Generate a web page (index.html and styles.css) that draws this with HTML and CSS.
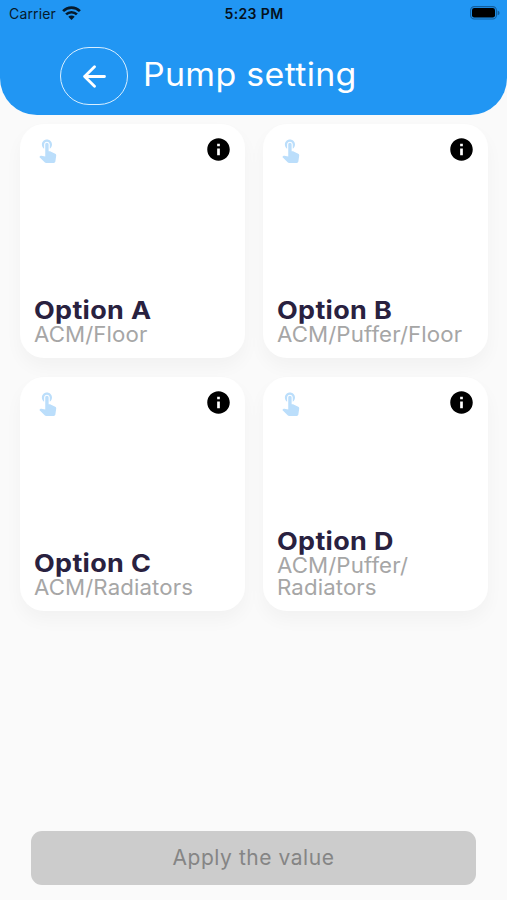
FILE: index.html
```
<!DOCTYPE html>
<html lang="en">
<head>
<meta charset="utf-8">
<title>Pump setting</title>
<link rel="stylesheet" href="styles.css">
</head>
<body>
<svg class="symbols" aria-hidden="true">
  <symbol id="touch" viewBox="0 0 24 24"><path d="M9 11.24V7.5C9 6.12 10.12 5 11.5 5S14 6.12 14 7.5v3.74c1.21-.81 2-2.18 2-3.74C16 5.01 13.99 3 11.5 3S7 5.01 7 7.5c0 1.56.79 2.93 2 3.74zm9.84 4.63l-4.54-2.26c-.17-.07-.35-.11-.54-.11H13v-6c0-.83-.67-1.5-1.5-1.5S10 6.67 10 7.5v10.74l-3.43-.72c-.08-.01-.15-.03-.24-.03-.31 0-.59.13-.79.33l-.79.8 4.94 4.94c.27.27.65.44 1.06.44h6.79c.75 0 1.33-.55 1.44-1.28l.75-5.27c.01-.07.02-.14.02-.2 0-.62-.38-1.16-.91-1.38z"/></symbol>
  <symbol id="info" viewBox="0 0 24 24"><path d="M12 2C6.48 2 2 6.48 2 12s4.48 10 10 10 10-4.48 10-10S17.52 2 12 2zm1.2 15h-2.4v-6h2.4v6zm0-7.8h-2.4V6.9h2.4v2.3z"/></symbol>
</svg>
<header class="header">
  <div class="status">
    <div class="carrier"><span>Carrier</span>
      <svg width="19" height="14" viewBox="0 0 19 14"><g fill="none" stroke="#061a2b" stroke-width="2.7"><path d="M1.1 5.1a12 12 0 0 1 16.8 0"/><path d="M4.1 8.4a7.8 7.8 0 0 1 10.8 0"/></g><path d="M6.3 10.7a4.6 4.6 0 0 1 6.4 0L9.5 14z" fill="#061a2b"/></svg>
    </div>
    <span class="time">5:23 PM</span>
    <div class="battery"><svg width="30" height="14" viewBox="0 0 30 14"><rect x=".6" y=".6" width="25.8" height="12.4" rx="3.8" fill="none" stroke="#125e9d" stroke-width="1.1"/><rect x="2" y="2.1" width="23" height="9.4" rx="2.2"/><path d="M27.6 4.6q2 .6 2 2.3t-2 2.3z" fill="#125e9d"/></svg></div>
  </div>
  <div class="bar">
    <button class="back" aria-label="Back"><svg width="24" height="24" viewBox="0 0 24 24" fill="none" stroke="#fff" stroke-width="2.8" stroke-linecap="round" stroke-linejoin="round"><path d="M22.5 12.5H2.6M12.5 2.7L2.6 12.5l9.9 9.8"/></svg></button>
    <h1>Pump setting</h1>
  </div>
</header>
<main class="options">
  <section class="card">
    <div class="icons"><svg class="touch"><use href="#touch"/></svg><svg class="info"><use href="#info"/></svg></div>
    <div><h2>Option A</h2><p>ACM/Floor</p></div>
  </section>
  <section class="card">
    <div class="icons"><svg class="touch"><use href="#touch"/></svg><svg class="info"><use href="#info"/></svg></div>
    <div><h2>Option B</h2><p>ACM/Puffer/Floor</p></div>
  </section>
  <section class="card">
    <div class="icons"><svg class="touch"><use href="#touch"/></svg><svg class="info"><use href="#info"/></svg></div>
    <div><h2>Option C</h2><p>ACM/Radiators</p></div>
  </section>
  <section class="card">
    <div class="icons"><svg class="touch"><use href="#touch"/></svg><svg class="info"><use href="#info"/></svg></div>
    <div><h2>Option D</h2><p>ACM/Puffer/<br>Radiators</p></div>
  </section>
</main>
<footer class="footer"><button class="apply" disabled>Apply the value</button></footer>
</body>
</html>
```
FILE: styles.css
```
* { box-sizing: border-box; }
body {
  margin: 0;
  height: 900px;
  display: flex;
  flex-direction: column;
  background: #fafafa;
  font-family: Inter, sans-serif;
  overflow: hidden;
}
h1, h2, p {
  margin: 0;
  width: max-content;
  white-space: nowrap;
  transform-origin: left center;
}
button { font: inherit; padding: 0; }
svg { display: block; }
.symbols { display: none; }
.header {
  height: 114.5px;
  background: #2196f3;
  border-radius: 0 0 37px 37px;
}
.status {
  height: 27px;
  padding: 0 7px 0 9px;
  display: grid;
  grid-template-columns: 1fr auto 1fr;
  align-items: center;
  font-size: 14px;
  color: #061a2b;
}
.carrier { display: flex; align-items: center; gap: 6px; letter-spacing: .15px; }
.carrier svg { margin-bottom: 2px; }
.time { font-weight: 600; letter-spacing: .35px; margin-right: 1px; color: #04111d; }
.battery { display: flex; justify-content: flex-end; }
.battery svg { margin-bottom: 1px; }
.bar { display: flex; align-items: center; padding: 20px 0 0 60px; }
.back {
  width: 67.5px;
  height: 58px;
  display: flex;
  align-items: center;
  justify-content: center;
  background: none;
  border: 1.4px solid #d9efff;
  border-radius: 29px;
}
h1 {
  margin: -2px 0 0 15.5px;
  font-size: 32px;
  line-height: 40px;
  font-weight: 400;
  letter-spacing: .3px;
  transform: scaleX(1.06);
  color: #fff;
}
.options {
  display: grid;
  grid-template-columns: 225px 225px;
  grid-auto-rows: 234px;
  gap: 19px 18.5px;
  padding: 9.5px 0 0 19.5px;
}
.card {
  display: flex;
  flex-direction: column;
  justify-content: space-between;
  padding: 12px 13px 13px 14px;
  background: #fff;
  border-radius: 24px;
  box-shadow: 0 9px 18px rgba(0, 0, 0, .035);
}
.icons { display: flex; justify-content: space-between; }
.icons svg { width: 27px; height: 27px; }
.touch { fill: #bbdefb; }
.info { fill: #000; }
h2 {
  font-size: 24.5px;
  line-height: 26.5px;
  font-weight: 700;
  letter-spacing: .3px;
  transform: scaleX(1.1);
  color: #29213f;
}
p {
  font-size: 21.2px;
  line-height: 22px;
  font-weight: 400;
  letter-spacing: .1px;
  transform: scaleX(1.05);
  color: #a6a6a6;
}
.footer { margin-top: auto; padding: 0 31px 15px; }
.apply {
  width: 445px;
  height: 54px;
  padding-bottom: 2px;
  border: 0;
  border-radius: 11px;
  background: #ccc;
  color: #858585;
  font-size: 21px;
  letter-spacing: .55px;
}
```
